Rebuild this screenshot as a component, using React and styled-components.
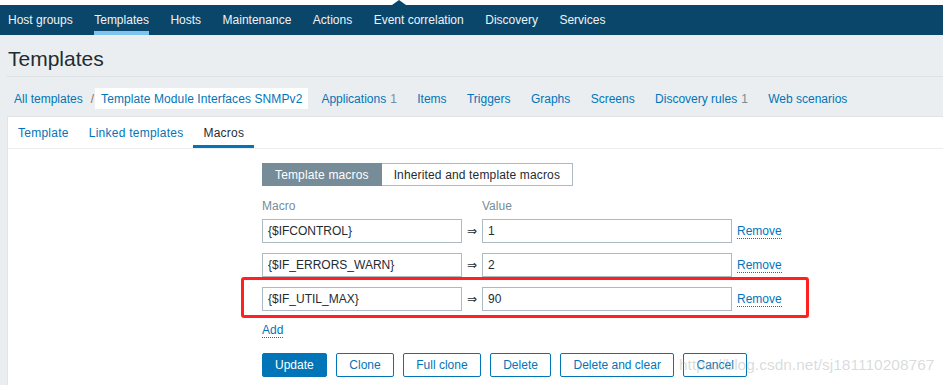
import React from "react";
import styled, { createGlobalStyle } from "styled-components";

const Global = createGlobalStyle`
  html, body { margin: 0; padding: 0; }
  body {
    background: #ebeef0;
    font-family: "Liberation Sans", Arial, sans-serif;
    font-size: 12px;
    color: #1f2c33;
    overflow: hidden;
  }
`;

const Page = styled.div`
  position: relative;
  width: 943px;
  height: 385px;
  overflow: hidden;
`;

const TopStrip = styled.div`
  position: relative;
  height: 5px;
  background: #fff;
`;

const Notch = styled.span`
  position: absolute;
  left: 392px;
  top: 0;
  width: 0;
  height: 0;
  border-left: 7px solid transparent;
  border-right: 7px solid transparent;
  border-bottom: 5px solid #0a466a;
`;

const Nav = styled.nav`
  display: flex;
  align-items: stretch;
  height: 30px;
  background: #0a466a;
  padding-left: 8px;
  gap: 21.5px;
`;

const NavItem = styled.a`
  position: relative;
  display: flex;
  align-items: center;
  color: #f0f3f5;
  text-decoration: none;
  white-space: nowrap;
  &::after {
    content: "";
    position: absolute;
    left: 0;
    right: 0;
    bottom: 0;
    height: 4px;
    background: ${(p) => (p.$active ? "#7fc4ee" : "transparent")};
  }
`;

const Main = styled.div`
  padding-left: 7px;
`;

const Title = styled.h1`
  margin: 0;
  padding: 12px 0 5px 1px;
  font-size: 21px;
  line-height: 24px;
  font-weight: normal;
  color: #1f2c33;
  border-bottom: 1px solid #dde2e5;
`;

const Crumbs = styled.div`
  display: flex;
  align-items: center;
  height: 21px;
  padding: 11px 0 7px 7px;
  white-space: nowrap;
`;

const Link = styled.a`
  color: #0275b8;
  text-decoration: none;
`;

const Sep = styled.span`
  color: #9b6a4f;
  margin: 0 1px 0 8px;
`;

const CurrentCrumb = styled.span`
  display: flex;
  align-items: center;
  height: 21px;
  padding: 0 6px;
  background: #fff;
  color: #0275b8;
  letter-spacing: 0.1px;
`;

const SubNav = styled.div`
  display: flex;
  gap: 20.4px;
  margin-left: 13px;
`;

const Count = styled.span`
  color: #768d99;
  margin-left: 4px;
`;

const Card = styled.div`
  background: #fff;
  border: 1px solid #dfe4e7;
  border-right: none;
  min-height: 300px;
`;

const Tabs = styled.div`
  display: flex;
  height: 31px;
  border-bottom: 1px solid #ebeef0;
`;

const Tab = styled.a`
  position: relative;
  display: flex;
  align-items: center;
  padding: 0 10px;
  letter-spacing: 0.25px;
  color: ${(p) => (p.$active ? "#1f2c33" : "#0275b8")};
  text-decoration: none;
  &::after {
    content: "";
    position: absolute;
    left: 0;
    right: 0;
    bottom: 0;
    height: 3px;
    background: ${(p) => (p.$active ? "#0275b8" : "transparent")};
  }
`;

const FormBody = styled.div`
  padding: 14px 0 20px 254px;
`;

const Segmented = styled.div`
  display: flex;
  height: 23px;
`;

const SegButton = styled.button`
  height: 23px;
  padding: 0 12px;
  margin: 0;
  font: inherit;
  letter-spacing: 0.15px;
  border: 1px solid ${(p) => (p.$active ? "#768d99" : "#acbbc2")};
  background: ${(p) => (p.$active ? "#768d99" : "#fff")};
  color: ${(p) => (p.$active ? "#fff" : "#1f2c33")};
  border-left-width: ${(p) => (p.$active ? "1px" : "0")};
`;

const MacroTable = styled.div`
  display: flex;
  flex-direction: column;
  margin-top: 12px;
`;

const Grid = styled.div`
  position: relative;
  display: grid;
  grid-template-columns: 200px 20px 250px auto;
  align-items: center;
`;

const HeaderRow = styled(Grid)`
  height: 16px;
  margin-bottom: 5px;
  color: #768d99;
`;

const Rows = styled.div`
  display: flex;
  flex-direction: column;
  gap: 10px;
`;

const Highlight = styled.span`
  position: absolute;
  left: -21px;
  top: -10px;
  width: 562px;
  height: 35px;
  border: 3px solid #ff2020;
  border-radius: 3px;
  pointer-events: none;
`;

const Input = styled.div`
  box-sizing: border-box;
  height: 24px;
  border: 1px solid #acbbc2;
  padding: 0 5px;
  display: flex;
  align-items: center;
  color: #1f2c33;
  background: #fff;
`;

const Arrow = styled.span`
  font-family: "DejaVu Sans", sans-serif;
  font-size: 12px;
  text-align: center;
  color: #1f2c33;
`;

const DottedLink = styled.a`
  justify-self: start;
  color: #0275b8;
  text-decoration: none;
  border-bottom: 1px dotted #0275b8;
  line-height: 14px;
  margin-left: ${(p) => p.$ml || 0}px;
`;

const AddRow = styled.div`
  margin-top: 12px;
  display: flex;
`;

const Buttons = styled.div`
  display: flex;
  gap: 9.6px;
  margin-top: 15px;
`;

const Button = styled.button`
  box-sizing: border-box;
  height: 24px;
  padding: 0 12px;
  margin: 0;
  font: inherit;
  border: 1px solid #0275b8;
  border-radius: 2px;
  background: ${(p) => (p.$primary ? "#0275b8" : "#fff")};
  color: ${(p) => (p.$primary ? "#fff" : "#0275b8")};
`;

const Watermark = styled.div`
  position: absolute;
  left: 679px;
  top: 356px;
  font-family: "Liberation Sans", Arial, sans-serif;
  font-size: 15.5px;
  color: rgba(170, 176, 180, 0.45);
  white-space: nowrap;
  pointer-events: none;
`;

const navItems = [
  "Host groups",
  "Templates",
  "Hosts",
  "Maintenance",
  "Actions",
  "Event correlation",
  "Discovery",
  "Services",
];

const subNav = [
  ["Applications", "1"],
  ["Items"],
  ["Triggers"],
  ["Graphs"],
  ["Screens"],
  ["Discovery rules", "1"],
  ["Web scenarios"],
];

const macros = [
  ["{$IFCONTROL}", "1"],
  ["{$IF_ERRORS_WARN}", "2"],
  ["{$IF_UTIL_MAX}", "90", true],
];

export default function App() {
  return (
    <Page>
      <Global />
      <TopStrip>
        <Notch />
      </TopStrip>
      <Nav>
        {navItems.map((n) => (
          <NavItem key={n} $active={n === "Templates"}>
            {n}
          </NavItem>
        ))}
      </Nav>
      <Main>
        <Title>Templates</Title>
        <Crumbs>
          <Link>All templates</Link>
          <Sep>/</Sep>
          <CurrentCrumb>Template Module Interfaces SNMPv2</CurrentCrumb>
          <SubNav>
            {subNav.map(([label, count]) => (
              <Link key={label}>
                {label}
                {count && <Count>{count}</Count>}
              </Link>
            ))}
          </SubNav>
        </Crumbs>
        <Card>
          <Tabs>
            <Tab>Template</Tab>
            <Tab>Linked templates</Tab>
            <Tab $active>Macros</Tab>
          </Tabs>
          <FormBody>
            <Segmented>
              <SegButton $active>Template macros</SegButton>
              <SegButton>Inherited and template macros</SegButton>
            </Segmented>
            <MacroTable>
              <HeaderRow>
                <span>Macro</span>
                <span />
                <span>Value</span>
                <span />
              </HeaderRow>
              <Rows>
                {macros.map(([m, v, hl]) => (
                  <Grid key={m}>
                    {hl && <Highlight />}
                    <Input>{m}</Input>
                    <Arrow>⇒</Arrow>
                    <Input>{v}</Input>
                    <DottedLink $ml={5}>Remove</DottedLink>
                  </Grid>
                ))}
              </Rows>
            </MacroTable>
            <AddRow>
              <DottedLink>Add</DottedLink>
            </AddRow>
            <Buttons>
              <Button $primary>Update</Button>
              <Button>Clone</Button>
              <Button>Full clone</Button>
              <Button>Delete</Button>
              <Button>Delete and clear</Button>
              <Button>Cancel</Button>
            </Buttons>
          </FormBody>
        </Card>
      </Main>
      <Watermark>https://blog.csdn.net/sj181110208767</Watermark>
    </Page>
  );
}
